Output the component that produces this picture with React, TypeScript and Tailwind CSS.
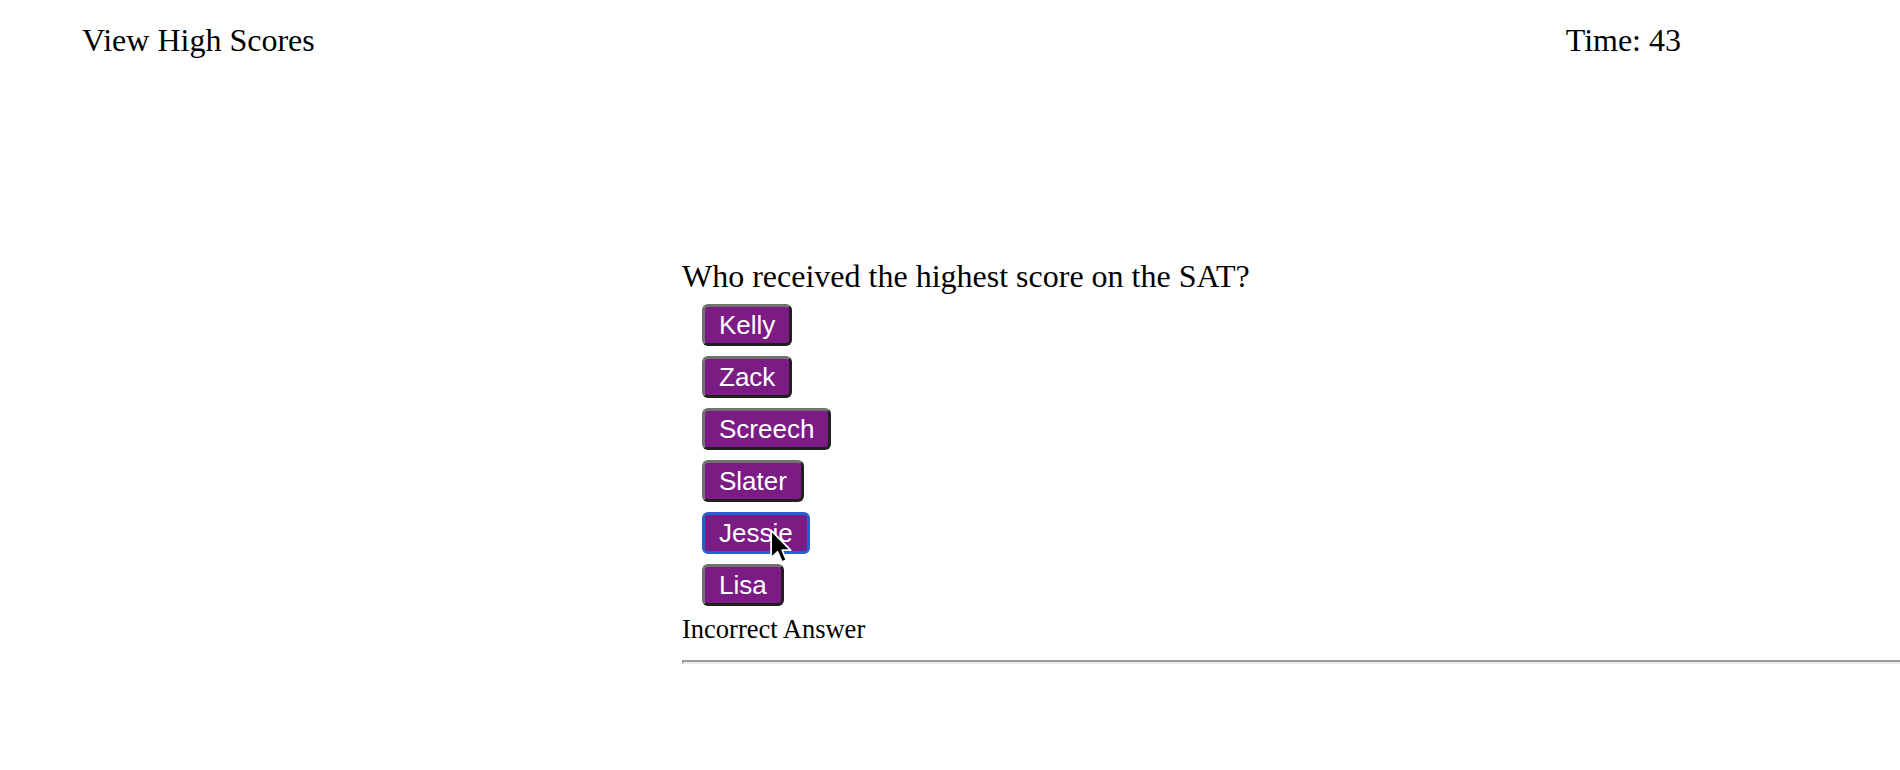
import React from 'react';

const answers = ['Kelly', 'Zack', 'Screech', 'Slater', 'Jessie', 'Lisa'];

function Cursor() {
  return (
    <svg
      className="pointer-events-none absolute left-[64px] top-[14px]"
      width="23"
      height="35"
      viewBox="0 0 17 26"
    >
      <path
        d="M1.5 1 L1.5 21.5 L6.3 17 L9.6 24.6 L12.9 23.1 L9.7 15.7 L16 15.7 Z"
        fill="#000"
        stroke="#fff"
        strokeWidth="1.3"
        strokeLinejoin="round"
      />
    </svg>
  );
}

function AnswerButton({ label, focused }: { label: string; focused?: boolean }) {
  return (
    <button
      className={
        focused
          ? 'relative self-start rounded-[6px] border-[3px] border-[#2462cf] bg-[#7b1c85] px-[14px] py-[4px] text-[26px] leading-[28px] text-white'
          : 'relative self-start rounded-[6px] border-[3px] border-t-[#707070] border-l-[#707070] border-b-[#202020] border-r-[#202020] bg-[#7b1c85] px-[14px] py-[4px] text-[26px] leading-[28px] text-white'
      }
      style={{ fontFamily: '"Liberation Sans", Arial, sans-serif' }}
    >
      {label}
      {focused && <Cursor />}
    </button>
  );
}

export default function App() {
  return (
    <div
      className="min-h-[770px] w-full overflow-hidden bg-white text-black"
      style={{ fontFamily: '"Liberation Serif", "Times New Roman", serif' }}
    >
      <header className="flex items-start justify-between pt-[22px] pl-[82px] pr-[219px] text-[32px] leading-[36px]">
        <span>View High Scores</span>
        <span>Time: 43</span>
      </header>

      <main className="pl-[682px] pt-[200px]">
        <h2 className="text-[32px] leading-[36px]">Who received the highest score on the SAT?</h2>

        <div className="mt-[10px] flex flex-col gap-[10px] pl-[20px]">
          {answers.map((a) => (
            <AnswerButton key={a} label={a} focused={a === 'Jessie'} />
          ))}
        </div>

        <p className="mt-[8px] text-[26.5px] leading-[30px]">Incorrect Answer</p>

        <hr className="mt-[16px] h-0 border-t-2 border-l-2 border-b-2 border-r-0 border-t-[#9a9a9a] border-l-[#9a9a9a] border-b-[#ececec]" />
      </main>
    </div>
  );
}
